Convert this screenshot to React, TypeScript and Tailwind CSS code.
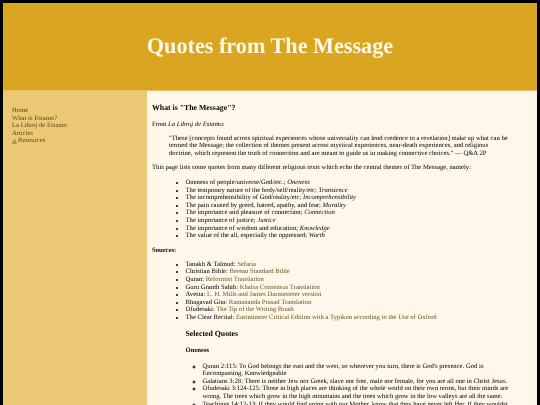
export default function App() {
  const a = "text-[#6b5520]";
  return (
    <div className="h-[405px] w-[540px] overflow-hidden bg-black pt-[3px] pl-[3px] pr-[3px] font-['Liberation_Serif',serif] text-[6.67px] leading-[7.6px] text-black [text-rendering:geometricPrecision] blur-[0.3px]">
      <header className="h-[88px] bg-[#daa520] border-b border-[#e8bf5e] flex items-center justify-center">
        <h1 className="text-[22.2px] leading-none font-bold text-[#fff8e7]">Quotes from The Message</h1>
      </header>
      <div className="flex h-[320px]">
        <nav className="w-[144px] shrink-0 bg-[#ebc974] pl-[9px] pt-[16px] text-[#5c4a1c]">
          <div>Home</div>
          <div>What is Estamo?</div>
          <div>La Libroj de Estamo</div>
          <div>Articles</div>
          <div className="flex items-center gap-[1px]">
            <svg viewBox="0 0 10 10" className="w-[5px] h-[5px]" fill="none" stroke="#5c4a1c" strokeWidth="1.2"><path d="M5 1.5 1 8.5h8z" /></svg>
            <span>Resources</span>
          </div>
        </nav>
        <main className="flex-1 bg-[#fff7ea] pl-[5px] pr-[7px] pt-[12px]">
          <h2 className="text-[7.8px] leading-[9px] font-bold">What is "The Message"?</h2>
          <p className="mt-[9px]">From <i>La Libroj de Estamo</i>:</p>
          <blockquote className="mt-[6px] ml-[17px] mr-[17px]">"These [concepts found across spiritual experiences whose universality can lend credence to a revelation] make up what can be termed the Message; the collection of themes present across mystical experiences, near-death experiences, and religious doctrine, which represent the truth of connection and are meant to guide us in making connective choices." — Q&amp;A 2P</blockquote>
          <p className="mt-[6.5px]">This page lists some quotes from many different religious texts which echo the central themes of The Message, namely:</p>
          <ul className="mt-[7.5px] ml-[33.5px] list-disc">
            <li>Oneness of people/universe/God/etc.; <i>Oneness</i></li>
            <li>The temporary nature of the body/self/reality/etc; <i>Transience</i></li>
            <li>The incomprehensibility of God/reality/etc; <i>Incomprehensibility</i></li>
            <li>The pain caused by greed, hatred, apathy, and fear; <i>Morality</i></li>
            <li>The importance and pleasure of connection; <i>Connection</i></li>
            <li>The importance of justice; <i>Justice</i></li>
            <li>The importance of wisdom and education; <i>Knowledge</i></li>
            <li>The value of the all, especially the oppressed; <i>Worth</i></li>
          </ul>
          <p className="mt-[7.5px] font-bold">Sources:</p>
          <ul className="mt-[6px] ml-[33.5px] list-disc">
            <li>Tanakh &amp; Talmud: <span className={a}>Sefaria</span></li>
            <li>Christian Bible: <span className={a}>Berean Standard Bible</span></li>
            <li>Quran: <span className={a}>Reformist Translation</span></li>
            <li>Guru Granth Sahib: <span className={a}>Khalsa Consensus Translation</span></li>
            <li>Avesta: <span className={a}>L. H. Mills and James Darmesteter version</span></li>
            <li>Bhagavad Gita: <span className={a}>Ramananda Prasad Translation</span></li>
            <li>Ofudesaki: <span className={a}>The Tip of the Writing Brush</span></li>
            <li>The Clear Recital: <span className={a}>Eastminster Critical Edition with a Typikon according to the Use of Oxford</span></li>
          </ul>
          <h3 className="mt-[7.5px] ml-[33.5px] text-[7.8px] leading-[9px] font-bold">Selected Quotes</h3>
          <p className="mt-[9px] ml-[33.5px] font-bold">Oneness</p>
          <ul className="mt-[8px] ml-[50.5px] mr-[17px] list-[circle]">
            <li>Quran 2:115: To God belongs the east and the west, so wherever you turn, there is God's presence. God is Encompassing, Knowledgeable</li>
            <li>Galatians 3:28: There is neither Jew nor Greek, slave nor free, male nor female, for you are all one in Christ Jesus.</li>
            <li>Ofudesaki 3:124-125: Those in high places are thinking of the whole world on their own terms, but their minds are wrong. The trees which grow in the high mountains and the trees which grow in the low valleys are all the same.</li>
            <li>Teachings 14:12-13: If they would find union with our Mother, know that they have never left Her. If they wouldst</li>
          </ul>
        </main>
      </div>
    </div>
  );
}
